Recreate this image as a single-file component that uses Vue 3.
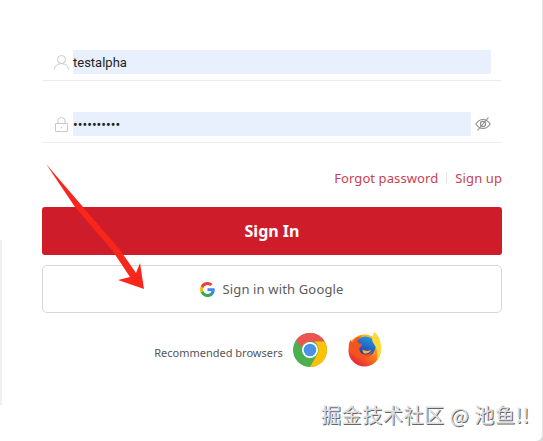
<template>
  <div class="page">
    <form class="login" @submit.prevent>
      <div class="field">
        <svg class="field-icon" viewBox="0 0 15 15" fill="none" stroke="#c8c8c8" stroke-width="1">
          <circle cx="7.500" cy="4.500" r="4" />
          <path d="M0.500 14.500c0-3.400 2.800-5.800 7-5.800s7 2.400 7 5.800" />
        </svg>
        <div class="fill wide">testalpha</div>
      </div>
      <div class="field second">
        <svg class="field-icon" viewBox="0 0 15 15" fill="none" stroke="#c8c8c8" stroke-width="1">
          <rect x="1.500" y="6.500" width="12" height="8" rx="0.500" />
          <path d="M4 6.500V3.500a3.500 3 0 0 1 7 0v3" />
          <path d="M7.500 10v1.500" />
        </svg>
        <div class="fill dots">••••••••••</div>
        <svg class="eye" viewBox="0 0 16 16" fill="none" stroke="#8c8c8c" stroke-width="1.100">
          <path d="M0.800 8c2-3 4.400-4.500 7.200-4.500s5.200 1.500 7.200 4.500c-2 3-4.400 4.500-7.200 4.500S2.800 11 0.800 8z" />
          <circle cx="8" cy="8" r="2.600" />
          <path d="M13.500 1.500L2.500 14.500" />
        </svg>
      </div>

      <div class="links">
        <a>Forgot password</a>
        <span class="sep"></span>
        <a>Sign up</a>
      </div>

      <button class="btn-signin">Sign In</button>
      <button class="btn-google">
        <svg class="g" viewBox="0 0 18 18">
          <path fill="#4285f4" d="M17.640 9.200c0-.640-.060-1.250-.160-1.840H9v3.480h4.840a4.140 4.140 0 0 1-1.800 2.720v2.260h2.920c1.700-1.570 2.680-3.880 2.680-6.620z" />
          <path fill="#34a853" d="M9 18c2.430 0 4.470-.810 5.960-2.180l-2.920-2.260c-.810.540-1.840.860-3.040.860-2.340 0-4.320-1.580-5.030-3.710H.960v2.330A9 9 0 0 0 9 18z" />
          <path fill="#fbbc05" d="M3.970 10.710A5.400 5.400 0 0 1 3.680 9c0-.590.100-1.170.290-1.710V4.960H.960A9 9 0 0 0 0 9c0 1.450.350 2.830.960 4.040l3.010-2.330z" />
          <path fill="#ea4335" d="M9 3.580c1.320 0 2.510.450 3.440 1.350l2.580-2.580C13.460.890 11.430 0 9 0A9 9 0 0 0 .960 4.960l3.010 2.330C4.680 5.160 6.660 3.580 9 3.580z" />
        </svg>
        <span>Sign in with Google</span>
      </button>

      <div class="browsers">
        <span class="rec">Recommended browsers</span>
        <svg class="chrome" viewBox="0 0 34 34">
          <circle cx="17" cy="17" r="17" fill="#4caf50" />
          <path fill="#ef5350" d="M17 0a17 17 0 0 1 14.720 8.500H17a8.500 8.500 0 0 0-8.100 6L3.200 7A17 17 0 0 1 17 0z" />
          <path fill="#ffc107" d="M31.720 8.500A17 17 0 0 1 17 34l7.400-12.800A8.500 8.500 0 0 0 25.500 17c0-3.400-1.500-6.500-4.200-8.500z" />
          <circle cx="17" cy="17" r="8" fill="#fff" />
          <circle cx="17" cy="17" r="6.300" fill="#4b91e8" />
        </svg>
        <svg class="firefox" viewBox="0 0 36 36">
          <defs>
            <linearGradient id="ffBase" x1="0.800" y1="0.100" x2="0.200" y2="0.900">
              <stop offset="0" stop-color="#ffc21f" />
              <stop offset="0.500" stop-color="#ff7a1a" />
              <stop offset="1" stop-color="#e8263a" />
            </linearGradient>
            <linearGradient id="ffGlobe" x1="0.700" y1="0" x2="0.300" y2="1">
              <stop offset="0" stop-color="#1f9be8" />
              <stop offset="1" stop-color="#2b2f9a" />
            </linearGradient>
          </defs>
          <circle cx="18" cy="19" r="16.500" fill="url(#ffBase)" />
          <circle cx="19" cy="15" r="10.500" fill="url(#ffGlobe)" />
          <path fill="#ffd83a" d="M28 0c5 4 7.500 10 7 18-.3 5-2 8.500-4.500 11.500 1.500-5 1-12-2-16-1.500-2-3-4-2.500-7 .2-2.500 1-5 2-6.500z" />
          <path fill="#f4541f" d="M3 8l3 3 3-4.500c2-1.500 4-2 5.500-2-2.500 2-3.500 4-3.500 6 1 1 2.500 1.500 4 1.500 1 1.500 0 3-2 4-1 3 1 6.500 5 7 3 .4 6-.6 8-3-2 5-7 8-12 7-6-1-10-5.500-12-10-.4-3 0-6 1.500-9z" />
          <path fill="#ffb13a" d="M16 18c3 2 7 2 9 0-1 3-4 4.500-7 4-1.500-.3-2-2-2-4z" />
        </svg>
      </div>
    </form>

    <svg class="arrow" viewBox="0 0 100 130">
      <path fill="#f9261c" d="M0 1L37 44 74 87 90 110 94 100 98 126 72 117 84 114 66 87 29 44z" />
    </svg>

    <div class="watermark">掘金技术社区 @ 池鱼!!</div>
  </div>
</template>

<script setup>
</script>

<style>
html, body { margin: 0; background: #dcdcdc; }
</style>

<style scoped>
.page {
  position: relative;
  width: 543px;
  height: 441px;
  overflow: hidden;
  box-sizing: border-box;
  padding: 50px 40px 0 42px;
  background: #fff;
  border-right: 1px solid #e6e6e6;
  border-bottom-right-radius: 7px;
  font-family: "Noto Sans", "Open Sans", sans-serif;
}
.page::before {
  content: "";
  position: absolute;
  left: 0;
  top: 240px;
  width: 2px;
  height: 165px;
  background: #f0f0f0;
}
.field {
  display: flex;
  align-items: flex-start;
  height: 30px;
  border-bottom: 1px solid #ececec;
}
.field.second {
  margin-top: 31px;
}
.field-icon {
  width: 15px;
  height: 15px;
  margin: 5px 4px 0 12px;
  flex-shrink: 0;
}
.fill {
  height: 24px;
  line-height: 25px;
  background: #e8f0fe;
  color: #222;
  font-family: "Roboto", sans-serif;
  font-size: 13px;
  flex: none;
}
.wide { width: 418px; }
.dots {
  width: 398px;
  font-size: 14px;
  line-height: 26px;
}
.eye {
  width: 16px;
  height: 16px;
  margin: 4px 0 0 4px;
  flex-shrink: 0;
}
.links {
  display: flex;
  justify-content: flex-end;
  align-items: center;
  margin-top: 25px;
  height: 20px;
  font-size: 13px;
  letter-spacing: 0.1px;
  color: #cb3d50;
}
.sep {
  width: 1px;
  height: 12px;
  background: #e8e8e8;
  margin: 0 8px;
}
.btn-signin {
  display: block;
  width: 100%;
  height: 48px;
  margin-top: 19px;
  border: none;
  border-radius: 3px;
  background: #ce1c2b;
  color: #fff;
  font-family: inherit;
  font-size: 16px;
  font-weight: 700;
}
.btn-google {
  display: flex;
  align-items: center;
  justify-content: center;
  gap: 7px;
  width: 100%;
  height: 48px;
  margin-top: 10px;
  box-sizing: border-box;
  border: 1px solid #d6d6d6;
  border-radius: 5px;
  background: #fff;
  color: #5c5c5c;
  font-family: inherit;
  font-size: 13px;
  letter-spacing: 0.15px;
}
.g { width: 15px; height: 15px; }
.browsers {
  display: flex;
  align-items: center;
  justify-content: center;
  margin-top: 19px;
  height: 35px;
  padding-right: 8px;
}
.rec {
  font-size: 11px;
  color: #555;
  margin-right: 10px;
  padding-top: 5px;
}
.chrome { width: 34px; height: 34px; margin-right: 20px; }
.firefox { width: 35px; height: 35px; }
.arrow {
  position: absolute;
  left: 46px;
  top: 163px;
  width: 100px;
  height: 130px;
  pointer-events: none;
}
.watermark {
  position: absolute;
  left: 321px;
  top: 403px;
  font-family: "Noto Sans CJK SC", sans-serif;
  font-size: 20px;
  letter-spacing: 0.6px;
  line-height: 24px;
  color: #dddddd;
  text-shadow: 1px 1px 0 #666;
  white-space: nowrap;
}
</style>
